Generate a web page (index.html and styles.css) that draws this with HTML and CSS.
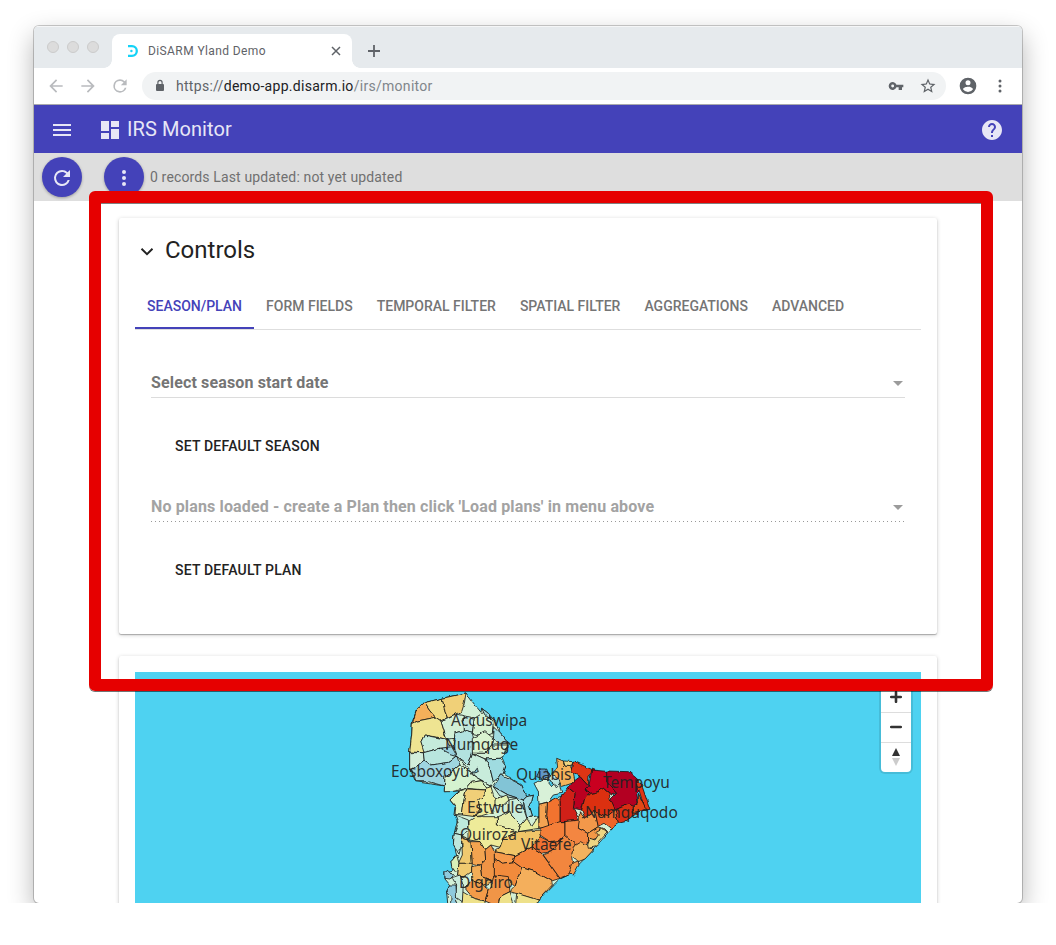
FILE: index.html
```html
<!DOCTYPE html>
<html lang="en">
<head>
<meta charset="utf-8">
<title>DiSARM Yland Demo</title>
<link rel="stylesheet" href="styles.css">
</head>
<body>
<div class="stage">
<div class="window">
  <div class="tabstrip">
    <div class="lights"><i></i><i></i><i></i></div>
    <div class="tab">
      <svg class="favicon" width="13" height="14" viewBox="0 0 13 14"><path d="M2 2.200h4a4.800 4.800 0 0 1 0 9.600H2" fill="none" stroke="#14d3f7" stroke-width="2.300"/><circle cx="5.400" cy="7" r="1.200" fill="#14d3f7"/></svg>
      <span class="tab-title">DiSARM Yland Demo</span>
      <svg width="10" height="10" viewBox="0 0 10 10"><path d="M1 1l8 8M9 1l-8 8" stroke="#5f6368" stroke-width="1.5"/></svg>
    </div>
    <svg class="newtab" width="14" height="14" viewBox="0 0 14 14"><path d="M7 1v12M1 7h12" stroke="#5f6368" stroke-width="1.8"/></svg>
  </div>
  <div class="toolbar">
    <svg class="nav" width="20" height="20" viewBox="0 0 24 24"><path d="M20 11H7.83l5.59-5.59L12 4l-8 8 8 8 1.41-1.41L7.83 13H20v-2z"/></svg>
    <svg class="nav" width="20" height="20" viewBox="0 0 24 24"><path d="M12 4l-1.41 1.41L16.17 11H4v2h12.17l-5.58 5.59L12 20l8-8z"/></svg>
    <svg class="nav" width="20" height="20" viewBox="0 0 24 24"><path d="M17.65 6.35A7.96 7.96 0 0 0 12 4a8 8 0 1 0 7.73 10h-2.08A6 6 0 1 1 12 6c1.66 0 3.14.69 4.22 1.78L13 11h7V4l-2.35 2.35z"/></svg>
    <div class="omnibox">
      <svg class="lock" width="12" height="14" viewBox="0 0 12 14"><path d="M3 5h6a1 1 0 0 1 1 1v5a1 1 0 0 1-1 1H3a1 1 0 0 1-1-1V6a1 1 0 0 1 1-1z" fill="#5f6368"/><path d="M3.900 5.500V3.500a2.100 2.100 0 0 1 4.200 0v2" fill="none" stroke="#5f6368" stroke-width="1.200"/></svg>
      <span class="url">https://<b>demo-app.disarm.io</b><em>/irs/monitor</em></span>
      <svg class="key" width="16" height="16" viewBox="0 0 24 24"><path d="M12.650 10A6 6 0 1 0 12.650 14H16v4h5v-4h2v-4H12.650zM7 14.200a2.200 2.200 0 1 1 0-4.400 2.200 2.200 0 0 1 0 4.400z"/></svg>
      <svg class="star" width="18" height="18" viewBox="0 0 24 24"><path d="M22 9.240l-7.190-.62L12 2 9.190 8.630 2 9.240l5.460 4.730L5.820 21 12 17.270 18.180 21l-1.630-7.030L22 9.240zM12 15.400l-3.760 2.270 1-4.280-3.320-2.880 4.380-.38L12 6.100l1.710 4.040 4.380.38-3.320 2.880 1 4.280L12 15.400z"/></svg>
    </div>
    <svg class="account" width="20" height="20" viewBox="0 0 24 24"><path d="M12 2a10 10 0 1 0 0 20 10 10 0 0 0 0-20zm0 3a3 3 0 1 1 0 6 3 3 0 0 1 0-6zm0 14.200a7.200 7.200 0 0 1-6-3.220c.03-1.990 4-3.080 6-3.080 1.990 0 5.970 1.090 6 3.080a7.200 7.200 0 0 1-6 3.220z"/></svg>
    <svg class="dots" width="4" height="14" viewBox="0 0 4 14"><circle cx="2" cy="2" r="1.500"/><circle cx="2" cy="7" r="1.500"/><circle cx="2" cy="12" r="1.500"/></svg>
  </div>
  <header class="appbar">
    <svg class="menu" width="24" height="24" viewBox="0 0 24 24"><path d="M3 18h18v-2H3v2zm0-5h18v-2H3v2zm0-7v2h18V6H3z"/></svg>
    <svg class="dash" width="24" height="24" viewBox="0 0 24 24"><path d="M3 13h8V3H3v10zm0 8h8v-6H3v6zm10 0h8V11h-8v10zm0-18v6h8V3h-8z"/></svg>
    <h1>IRS Monitor</h1>
    <svg class="help" width="24" height="24" viewBox="0 0 24 24"><path d="M12 2C6.480 2 2 6.480 2 12s4.480 10 10 10 10-4.480 10-10S17.520 2 12 2zm1 17h-2v-2h2v2zm2.070-7.750l-.9.92C13.450 12.900 13 13.500 13 15h-2v-.5c0-1.100.45-2.100 1.170-2.830l1.240-1.260c.37-.36.59-.86.59-1.410 0-1.100-.9-2-2-2s-2 .9-2 2H8c0-2.210 1.790-4 4-4s4 1.790 4 4c0 .88-.36 1.680-.93 2.250z"/></svg>
  </header>
  <div class="statusbar">
    <span class="fab"><svg width="24" height="24" viewBox="0 0 24 24"><path d="M17.65 6.35A7.96 7.96 0 0 0 12 4a8 8 0 1 0 7.730 10h-2.080A6 6 0 1 1 12 6c1.660 0 3.140.69 4.220 1.780L13 11h7V4l-2.350 2.350z"/></svg></span>
    <span class="fab second"><svg width="24" height="24" viewBox="0 0 24 24"><circle cx="12" cy="6" r="2"/><circle cx="12" cy="12" r="2"/><circle cx="12" cy="18" r="2"/></svg></span>
    <span class="status">0 records Last updated: not yet updated</span>
  </div>
  <main class="content">
    <section class="card controls">
      <h2><svg width="14" height="10" viewBox="0 0 14 10"><path d="M1.500 1.800L7 7.200l5.500-5.400" fill="none" stroke="#222" stroke-width="2"/></svg>Controls</h2>
      <nav class="tabs"><span class="active">SEASON/PLAN</span><span>FORM FIELDS</span><span>TEMPORAL FILTER</span><span>SPATIAL FILTER</span><span>AGGREGATIONS</span><span>ADVANCED</span></nav>
      <div class="form">
        <div class="select">Select season start date<i></i></div>
        <div class="btn">SET DEFAULT SEASON</div>
        <div class="select disabled">No plans loaded - create a Plan then click 'Load plans' in menu above<i></i></div>
        <div class="btn">SET DEFAULT PLAN</div>
      </div>
    </section>
    <section class="card mapcard">
      <div class="map">
        <svg class="regions" width="786" height="231" viewBox="0 0 786 231">
          <defs><filter id="coast" x="-5%" y="-5%" width="110%" height="110%" color-interpolation-filters="sRGB"><feTurbulence type="fractalNoise" baseFrequency=".16" numOctaves="1" seed="4"/><feDisplacementMap in="SourceGraphic" scale="4" xChannelSelector="R" yChannelSelector="G"/></filter></defs>
          <g filter="url(#coast)">
          <g class="land" transform="translate(250 13) scale(.33333)">
            <path fill="#d3f0d6" d="M243 24L262 50 288 82 290 70 310 85 330 110 345 145 370 175 368 195 350 215 362 243 355 265 410 300 425 335 445 330 440 350 430 362 440 395 425 398 462 392 462 365 490 350 560 320 640 300 740 370 680 430 620 500 550 570 520 585 460 645 455 680 190 680 185 620 195 600 180 582 180 562 205 555 198 530 215 512 205 470 208 445 218 400 207 390 210 365 195 345 222 318 178 320 178 303 92 290 74 250 74 201 80 150 82 110 95 75 118 53 180 38z"/>
            <path fill="#f4b05a" d="M82 116L95 75 118 53 135 78 152 97 98 108z"/>
            <path fill="#efdb82" d="M118 53L172 40 180 80 187 97 168 108 152 97 135 78z"/>
            <path fill="#f0d078" d="M172 40L243 24 238 55 230 80 212 87 187 97 180 80z"/>
            <path fill="#eee492" d="M82 116L98 108 152 97 168 108 185 163 150 155 118 150 108 170 118 195 115 203 74 201 80 150z"/>
            <path fill="#c5ebdc" d="M118 150L185 163 195 190 165 190 118 203 108 170z"/>
            <path fill="#d3f0d6" d="M168 108L212 87 235 92 235 137 210 145 208 160 185 163z"/>
            <path fill="#bfe6dc" d="M235 92L268 100 262 145 235 137z"/>
            <path fill="#b2e2e0" d="M210 145L235 137 262 145 268 170 262 205 250 240 215 212 205 180z"/>
            <path fill="#d5f1d2" d="M268 100L300 80 325 110 322 145 300 155 262 145z"/>
            <path fill="#d9f3d0" d="M262 160L300 140 325 160 320 180 300 205 262 205z"/>
            <path fill="#9fdbe0" d="M325 125L345 145 370 175 345 175 322 165zM290 70L310 85 318 100 300 90z"/>
            <path fill="#d3f0d6" d="M320 180L368 180 360 210 345 220 300 222 262 205 300 205z"/>
            <path fill="#d3eedb" d="M74 203L115 203 118 228 90 250 74 250z"/>
            <path fill="#b8e6de" d="M115 203L165 190 215 212 190 232 140 240 118 228z"/>
            <path fill="#96d0dd" d="M165 190L200 185 215 212 195 206z"/>
            <path fill="#9fd6e0" d="M90 250L118 228 140 240 190 232 215 212 225 240 180 275 178 303 130 290 92 290 88 272 74 250z"/>
            <path fill="#c8ecdb" d="M215 212L250 240 262 205 300 222 315 250 325 290 320 303 270 275 235 235z"/>
            <path fill="#74b9d2" d="M260 265L275 245 280 260z"/>
            <path fill="#9fdbe0" d="M300 222L345 220 362 243 355 265 345 275 325 290 315 250z"/>
            <path fill="#82c4d6" d="M325 305L350 270 410 300 425 335 415 345 370 330z"/>
            <path fill="#b6e3e0" d="M325 305L370 330 415 345 418 375 395 340 345 333z"/>
            <path fill="#a3dce2" d="M425 335L445 330 440 350 430 362 440 395 425 398 415 345z"/>
            <path fill="#d5f2d0" d="M180 275L225 240 270 275 320 303 302 310 290 287 260 292 245 310 200 320 178 320z"/>
            <path fill="#dcf1bb" d="M245 310L260 292 290 287 302 310 302 315 270 312z"/>
            <path fill="#e2f2bd" d="M195 345L222 318 245 310 237 345 232 390 210 388 212 365z"/>
            <path fill="#f0cf78" d="M245 312L302 315 300 330 280 345 285 372 270 395 232 390 237 345z"/>
            <path fill="#edeb9c" d="M302 310L318 305 327 335 340 350 320 370 330 380 290 392 272 395 285 372 280 345 300 330z"/>
            <path fill="#e3f1b2" d="M330 345L365 330 372 345 350 365 330 360z"/>
            <path fill="#cceedb" d="M372 345L395 340 412 360 425 398 408 418 372 380z"/>
            <path fill="#e7edac" d="M337 395L372 380 408 418 400 440 337 420z"/>
            <path fill="#bdeadc" d="M210 390L250 405 252 435 230 450 208 445 220 415z"/>
            <path fill="#eeeb99" d="M272 395L337 395 337 420 400 440 355 460 345 487 318 480 300 495 285 470 252 465 252 408z"/>
            <path fill="#e9ec9e" d="M408 418L425 398 440 425 462 392 462 430 400 440z"/>
            <path fill="#bfe7dc" d="M208 445L230 450 230 480 222 508 205 478z"/>
            <path fill="#efc96f" d="M230 450L258 470 262 535 220 535 232 510z"/>
            <path fill="#f3a450" d="M258 470L285 470 300 495 302 525 285 540 262 535z"/>
            <path fill="#f0c568" d="M355 460L400 440 467 435 465 465 440 485 390 512 328 500 345 487z"/>
            <path fill="#f09445" d="M300 495L318 480 328 500 330 590 290 575 285 540 302 525z"/>
            <path fill="#f69a4a" d="M328 500L390 512 385 530 350 535 328 520z"/>
            <path fill="#f28b3c" d="M328 520L350 535 385 530 410 548 390 605 365 580 328 570z"/>
            <path fill="#f4853a" d="M390 512L440 485 470 505 525 580 500 588 450 560 410 548 385 530z"/>
            <path fill="#f4af5c" d="M410 548L450 560 500 588 502 600 460 645 375 620 390 605z"/>
            <path fill="#d9efb8" d="M215 510L222 535 218 570 200 545 198 530z"/>
            <path fill="#f0ca70" d="M222 535L262 535 260 560 235 578 218 570z"/>
            <path fill="#f2ad57" d="M260 545L285 540 290 575 325 590 295 600 260 585z"/>
            <path fill="#f39b49" d="M240 610L260 585 295 600 310 615 300 648 265 640z"/>
            <path fill="#f09547" d="M325 590L330 570 370 575 375 620 345 635 340 665 300 648 310 615z"/>
            <path fill="#eee18a" d="M232 620L265 640 300 648 300 680 230 680zM345 635L375 620 395 680 335 680zM395 625L460 645 445 680 390 680z"/>
            <path fill="#c9ecdc" d="M200 578L225 570 235 600 232 650 210 635 215 605z"/>
            <path fill="#8fcadd" d="M195 600L213 600 215 650 230 680 195 680 198 635 185 620zM180 562L190 555 205 572 195 582 180 580z"/>
            <path fill="#d8f1d8" d="M447 295L480 280 500 305 520 280 530 325 505 330 490 350 462 358 460 320z"/>
            <path fill="#bce5de" d="M475 280L515 262 528 290 515 305 495 290z"/>
            <path fill="#6196c5" d="M455 275L465 252 485 252 493 275 475 282z"/>
            <path fill="#f5b35b" d="M515 220L535 228 540 243 557 245 565 265 570 292 530 305 520 280 500 265 518 250z"/>
            <path fill="#f0d682" d="M535 228L565 230 557 245 540 243z"/>
            <path fill="#df3514" d="M565 228L635 260 620 265 612 270 610 303 585 275 557 262z"/>
            <path fill="#bb0020" d="M565 290L585 275 610 303 600 315 618 325 598 345 590 375 565 370 570 325 550 308z"/>
            <path fill="#c90020" d="M620 255L675 260 665 290 695 325 680 330 655 310 642 320 618 325 600 315 612 302z"/>
            <path fill="#b30022" d="M665 258L730 260 755 280 770 310 755 325 760 355 740 365 730 358 690 375 675 345 695 325 665 290z"/>
            <path fill="#df3514" d="M755 280L770 300 795 373 780 375 765 325 760 310z"/>
            <path fill="#dc3010" d="M598 345L618 325 642 320 655 310 672 325 677 345 690 375 665 395 630 380 600 400 590 375z"/>
            <path fill="#d02018" d="M525 340L550 308 570 325 565 370 583 405 575 408 525 410z"/>
            <path fill="#f2732f" d="M487 352L515 337 525 350 525 410 520 422 492 425 485 392z"/>
            <path fill="#f4a352" d="M462 358L487 352 485 392 492 425 462 430z"/>
            <path fill="#f3984a" d="M583 380L600 400 630 380 640 425 608 445 580 430 565 430 583 405z"/>
            <path fill="#d92e13" d="M690 375L730 358 745 365 745 385 765 378 720 410 700 415z"/>
            <path fill="#e24716" d="M745 365L760 355 760 325 785 375 745 382z"/>
            <path fill="#ed642a" d="M630 380L665 395 690 375 700 415 680 430 660 415 640 425z"/>
            <path fill="#f47f39" d="M465 430L525 410 540 410 540 450 530 470 495 470 465 450z"/>
            <path fill="#f38641" d="M540 410L583 405 580 430 608 445 607 475 575 480 540 450z"/>
            <path fill="#ef7132" d="M440 485L465 455 495 470 530 465 535 480 500 500 470 505z"/>
            <path fill="#f2863e" d="M530 465L540 450 575 480 560 510 565 565 525 580 475 510 500 500z"/>
            <path fill="#f4b25e" d="M565 485L590 470 607 480 625 495 600 522 580 530 560 510z"/>
            <path fill="#f39b4b" d="M560 535L580 528 582 540 565 570 550 565z"/>
            <path fill="#f39847" d="M608 445L640 425 655 430 665 440 640 458 620 465 607 475z"/>
            <path fill="#edd582" d="M608 480L615 460 630 465 640 450 632 440 650 430 665 442 640 470 635 485 610 490z"/>
          </g></g>
          <g class="labels"><text x="316" y="54">Accuswipa</text><text x="310" y="78">Numquge</text><text x="256" y="105">Eosboxoyu</text><text x="381" y="108">Quiabis</text><text x="468" y="116">Tempoyu</text><text x="450" y="146">Numquqodo</text><text x="332" y="141">Estwule</text><text x="325" y="168">Quiroza</text><text x="386" y="178">Vitaefe</text><text x="324" y="216">Digniro</text></g>
        </svg>
        <div class="zoom">
          <span><svg width="12" height="12" viewBox="0 0 12 12"><path d="M6 1.200v9.600M1.200 6h9.600" stroke="#333" stroke-width="2.600" stroke-linecap="round"/></svg></span>
          <span><svg width="12" height="12" viewBox="0 0 12 12"><path d="M1.200 6h9.600" stroke="#333" stroke-width="2.600" stroke-linecap="round"/></svg></span>
          <span><svg width="8" height="18" viewBox="0 0 8 18"><path d="M0 8L4 0l4 8z" fill="#333"/><path d="M0 10l4 8 4-8z" fill="#ccc"/></svg></span>
        </div>
      </div>
    </section>
  </main>
</div>
<div class="highlight"></div>
</div>
</body>
</html>
```
FILE: styles.css
```css
* { box-sizing: border-box; }
body { margin: 0; background: #fff; font-family: Roboto, "Liberation Sans", sans-serif; }
svg { display: block; flex: none; }
.stage { position: relative; height: 903px; padding: 26px 34px 0; overflow: hidden; }
.window { height: 877px; border-radius: 5px; overflow: hidden; background: #fff; box-shadow: 0 0 0 1px rgba(0,0,0,.2), 0 10px 26px rgba(0,0,0,.3); }
.tabstrip { display: flex; height: 42px; padding-left: 13px; background: #e6eaed; box-shadow: inset 0 1px #f5f6f7; }
.lights { display: flex; gap: 8px; padding-top: 15px; width: 65px; }
.lights i { width: 12px; height: 12px; border-radius: 50%; background: #dcdcdc; border: 1px solid #cbcbcb; }
.tab { position: relative; display: flex; align-items: center; width: 240px; height: 34px; margin-top: 8px; padding: 0 11px 0 14px; background: #fff; border-radius: 8px 8px 0 0; }
.tab::before, .tab::after { content: ""; position: absolute; bottom: 0; width: 8px; height: 8px; }
.tab::before { left: -8px; background: radial-gradient(circle at 0 0, transparent 7.500px, #fff 8px); }
.tab::after { right: -8px; background: radial-gradient(circle at 100% 0, transparent 7.500px, #fff 8px); }
.tab-title { flex: 1; margin-left: 9px; font-size: 12px; letter-spacing: .4px; color: #5f6368; }
.newtab { margin: 18px 0 0 15px; }
.toolbar { display: flex; align-items: center; height: 37px; padding: 0 20px 0 12px; border-bottom: 1px solid #a9a9ac; fill: #5f6368; }
.nav { margin-right: 12px; fill: #b9bbbe; }
.omnibox { display: flex; align-items: center; width: 804px; height: 28px; padding: 0 9px 0 12px; border-radius: 14px; background: #f1f3f4; }
.url { flex: 1; margin-left: 10px; font-size: 14px; letter-spacing: .29px; color: #5f6368; }
.url b { font-weight: 400; color: #202124; }
.url em { font-style: normal; color: #80868b; }
.key { margin-right: 15px; }
.account { margin-left: 12px; }
.dots { margin-left: auto; }
.appbar { display: flex; align-items: center; height: 48px; padding: 0 18px 0 16px; background: #4442b9; color: #e7e6f6; fill: #e7e6f6; }
.menu { margin-top: 2px; }
.dash { margin: 2px 0 0 24px; }
.help { margin-top: 2px; }
.appbar h1 { flex: 1; margin: 0 0 0 5px; font-size: 20px; font-weight: 400; letter-spacing: .08px; line-height: 49px; }
.statusbar { display: flex; align-items: center; height: 48px; padding-left: 8px; background: #dedede; }
.fab { display: flex; align-items: center; justify-content: center; width: 40px; height: 40px; border-radius: 50%; background: #4442b9; fill: #e7e6f6; box-shadow: 0 1px 3px rgba(0,0,0,.3); }
.fab svg { margin-top: 2px; }
.second { margin-left: 22px; }
.status { margin-left: 6px; font-size: 14px; color: #707070; letter-spacing: .14px; }
.content { display: flex; flex-direction: column; gap: 22px; padding: 17px 85px 0; }
.card { background: #fff; border-radius: 2px; box-shadow: 0 1px 4px rgba(0,0,0,.2), 0 1px 1px rgba(0,0,0,.25); }
.controls { height: 416px; padding: 16px; }
.controls h2 { display: flex; align-items: center; height: 32px; margin: 0; padding-left: 5px; gap: 11px; font-size: 24px; font-weight: 400; color: #222; }
.controls h2 svg { margin-top: 4px; }
.tabs { display: flex; height: 48px; margin-top: 16px; border-bottom: 1px solid #dedede; color: #757575; font-size: 14px; font-weight: 500; line-height: 48px; }
.tabs span { height: 47px; padding: 0 12px; }
.tabs .active { color: #4442b9; border-bottom: 2px solid #4442b9; }
.form { padding: 38px 16px 0; }
.select { display: flex; align-items: center; justify-content: space-between; height: 30px; padding-right: 2px; border-bottom: 1px solid #dcdcdc; font-size: 16px; font-weight: 700; letter-spacing: .14px; color: #757575; }
.select i { margin-top: 2px; border: 5px solid transparent; border-top-color: #9b9b9b; border-bottom: 0; }
.select.disabled { color: #a3a3a3; border-bottom: 0; padding-bottom: 1px; background: repeating-linear-gradient(90deg, #999 0 1px, transparent 1px 4px) left bottom / 100% 1px no-repeat; }
.btn { height: 94px; padding: 0 24px; font-size: 14px; font-weight: 500; letter-spacing: .2px; line-height: 96px; color: #222; }
.mapcard { height: 300px; padding: 16px; }
.map { position: relative; height: 260px; background: #4ed2f1; overflow: hidden; }
.land { stroke: #111; stroke-width: 2.4; stroke-linejoin: round; }
.labels { font: 15.5px "Noto Sans", "Open Sans", sans-serif; fill: #222; fill-opacity: .93; }
.zoom { position: absolute; right: 10px; top: 10px; width: 30px; border-radius: 4px; background: #fff; box-shadow: 0 0 0 2px rgba(0,0,0,.1); }
.zoom span { display: flex; align-items: center; justify-content: center; height: 30px; padding-bottom: 1px; border-top: 1px solid #ddd; }
.highlight { position: absolute; left: 89px; top: 191px; width: 904px; height: 500px; border: 12px solid #e60000; border-radius: 6px; box-shadow: 0 1px 0 rgba(0,0,0,.55), inset 0 1px 0 rgba(0,0,0,.5); }
```
